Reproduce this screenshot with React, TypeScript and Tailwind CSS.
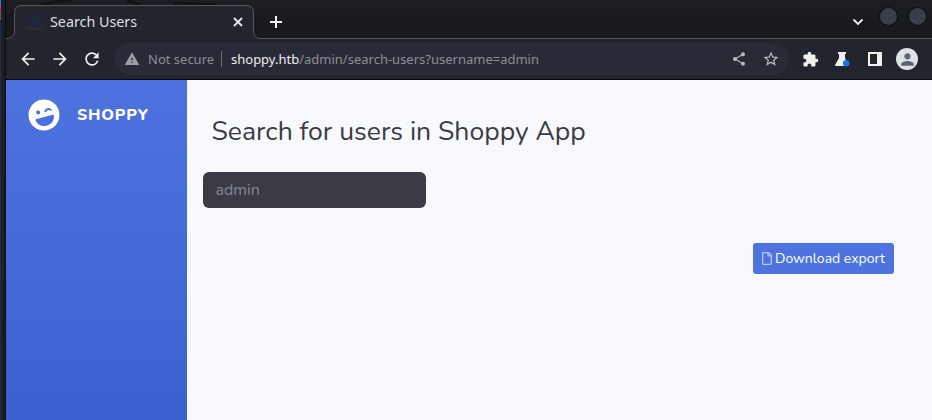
import React from "react";
import {
  MdArrowBack, MdArrowForward, MdRefresh, MdWarning, MdShare,
  MdStarBorder, MdExtension, MdPerson,
} from "react-icons/md";
import { FaLaughWink, FaRegFile } from "react-icons/fa";

function TabStrip() {
  return (
    <div className="relative flex h-[39px] bg-linear-to-b from-[#1d1e23] to-[#17181c]">
      <svg className="absolute inset-0" width="926" height="39" viewBox="0 0 926 39" fill="none">
        <path d="M0 17 Q30 3 66 0 M120 0 L134 5 M168 3 L210 5" stroke="#121317" strokeWidth="3" />
        <path d="M0 38.5 Q8.500 38.500 8.500 31 V12.500 Q8.500 5.500 16 5.500 H240 Q247.500 5.500 247.500 12.500 V31 Q247.500 38.500 255 38.500 V40 H0 Z" fill="#23252e" />
        <path d="M0 38.500 Q8.500 38.500 8.500 31 V12.500 Q8.500 5.500 16 5.500 H240 Q247.500 5.500 247.500 12.500 V31 Q247.500 38.500 255 38.500 H926" stroke="#55575c" />
      </svg>
      <div className="relative flex w-full items-center pt-[5px]">
        <div className="ml-[19px] w-[18px] text-[#1d2849]">
          <svg width="18" height="18" viewBox="0 0 18 18" fill="none" stroke="currentColor" strokeWidth="1.300">
            <path d="M3 6h13l-2 6H5zM5 6l2-4h5l2 4M6 9h7M8 6v6M11 6v6" />
            <text x="1" y="17" fontSize="4.800" fill="#30333f" stroke="none" fontFamily="Noto Sans">Shoppy</text>
          </svg>
        </div>
        <span className="ml-[7px] w-[181px] text-[14.300px] leading-5 text-[#dedfe1]">Search Users</span>
        <svg width="14" height="14" viewBox="0 0 14 14" fill="none" stroke="#e8e8e8" strokeWidth="1.800">
          <path d="M3 3l8 8M11 3l-8 8" />
        </svg>
        <svg className="ml-[21px]" width="20" height="20" viewBox="0 0 20 20" fill="none" stroke="#f2f2f2" strokeWidth="2">
          <path d="M4 10h12M10 4v12" />
        </svg>
        <svg className="ml-auto mr-[14px]" width="16" height="16" viewBox="0 0 16 16" fill="none" stroke="#f0f0f0" strokeWidth="1.800">
          <path d="M3.500 5.500l4.500 4.500 4.500-4.500" />
        </svg>
        <div className="mr-[12px] mb-[12px] size-[17px] rounded-full bg-[#393e4b] ring-1 ring-[#0d0e11]" />
        <div className="mr-[6px] mb-[12px] size-[17px] rounded-full bg-[#393e4b] ring-1 ring-[#0d0e11]" />
      </div>
    </div>
  );
}

function Toolbar() {
  return (
    <div className="flex h-[41px] items-center border-b border-[#08090c] bg-[#23252e] text-[#f0f0ec]">
      <MdArrowBack className="ml-[12px] size-5" />
      <MdArrowForward className="ml-[12px] size-5" />
      <MdRefresh className="ml-[12px] size-5" />
      <div className="ml-[12px] flex h-8 w-[675px] items-center rounded-full bg-[#282a35] text-[13px] text-[#8d8f95]">
        <MdWarning className="ml-[10px] size-4 text-[#9b9da3]" />
        <span className="ml-[8px] mt-px w-[73px] whitespace-nowrap">Not secure</span>
        <span className="h-4 w-px bg-[#6c6e75]" />
        <span className="ml-[9px] mt-px whitespace-nowrap"><span className="text-[#eeeeee]">shoppy.htb</span>/admin/search-users?username=admin</span>
        <MdShare className="ml-auto size-4 text-[#b9babc]" />
        <MdStarBorder className="ml-[15px] mr-[9px] size-[18px] text-[#bdbec0]" />
      </div>
      <MdExtension className="ml-[13px] size-[17px]" />
      <svg className="ml-[15px]" width="17" height="17" viewBox="0 0 17 17">
        <path d="M4 1h8v2h-1v4l3 6v2H2q-1 0-1-1l4-7V3H4z" fill="currentColor" />
        <circle cx="12.200" cy="12.300" r="3.200" fill="#1a73e8" />
      </svg>
      <svg className="ml-[17px]" width="14" height="14" viewBox="0 0 14 14">
        <path fillRule="evenodd" d="M0 0h14v14H0zM2 2v10h7V2z" fill="currentColor" />
      </svg>
      <div className="ml-[14px] flex size-[22px] items-center justify-center rounded-full bg-[#dee1e6]">
        <MdPerson className="size-[19px] text-[#5a6475]" />
      </div>
    </div>
  );
}

export default function App() {
  return (
    <div className="flex h-[420px] w-[932px] overflow-hidden bg-[#f8f9fd] font-['Noto_Sans',sans-serif]">
      <div className="flex w-[6px] shrink-0 flex-col border-r border-[#090a0d] bg-[#1c1e27]">
        <div className="h-[7px] w-px bg-[#397bd0]" />
        <div className="h-[4px] w-px bg-[#f51a22]" />
        <div className="h-[9px] w-px bg-[#625d65]" />
        <div className="w-px flex-1 bg-[#193149]" />
      </div>
      <div className="flex w-[926px] flex-col">
        <TabStrip />
        <Toolbar />
        <div className="flex flex-1 font-['Nunito','Noto_Sans',sans-serif]">
          <aside className="w-[181px] bg-linear-to-b from-[#4e73df] to-[#3b61d1]">
            <div className="flex h-[70px] items-center pl-[22px] text-white">
              <FaLaughWink className="size-8 -rotate-[15deg]" />
              <span className="ml-[17px] text-[16px] font-extrabold tracking-[0.800px]">SHOPPY</span>
            </div>
          </aside>
          <main className="flex flex-1 flex-col">
            <h1 className="ml-[24.500px] mt-[32px] h-[38px] whitespace-nowrap text-[26.550px] leading-[38px] text-[#3a3b45]">Search for users in Shoppy App</h1>
            <input aria-label="Username" placeholder="admin" className="ml-[16px] mt-[22px] h-9 w-[223px] rounded-[6px] bg-[#3c3b45] px-[12.500px] text-[16px] outline-none placeholder:text-[#858796]" />
            <button className="mr-[38px] mt-[35px] flex h-[31px] w-[141px] items-center self-end rounded-[3px] bg-[#4e73df] pl-[9px] text-[14px] text-white">
              <FaRegFile className="h-[13px] w-[10px] shrink-0 opacity-60" />
              <span className="ml-[3px] whitespace-nowrap">Download export</span>
            </button>
          </main>
        </div>
      </div>
    </div>
  );
}
